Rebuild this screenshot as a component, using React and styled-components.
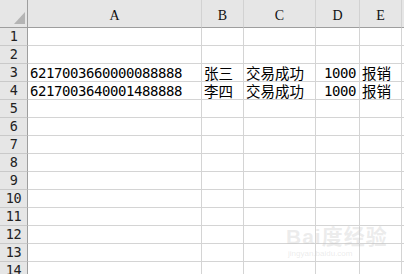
import React from 'react';
import styled, { createGlobalStyle } from 'styled-components';

const GlobalStyle = createGlobalStyle`
  html, body {
    margin: 0;
    padding: 0;
    background: #ffffff;
  }
`;

const columns = ['A', 'B', 'C', 'D', 'E'];
const rows = {
  3: ['6217003660000088888', '张三', '交易成功', '1000', '报销'],
  4: ['6217003640001488888', '李四', '交易成功', '1000', '报销'],
};

const Sheet = styled.div`
  position: relative;
  width: 404px;
  height: 274px;
  overflow: hidden;
  display: grid;
  grid-template-columns: 28px 174px 42px 72px 44px 42px 1fr;
  grid-auto-rows: 18px;
  grid-template-rows: 28px;
  background: #fff;
`;

const Corner = styled.div`
  position: relative;
  background: #e6e6e6;
  border-right: 1px solid #9e9e9e;
  border-bottom: 1px solid #9e9e9e;
  &::after {
    content: '';
    position: absolute;
    right: 2px;
    bottom: 3px;
    width: 0;
    height: 0;
    border-left: 11px solid transparent;
    border-bottom: 12px solid #b4b4b4;
  }
`;

const ColHead = styled.div`
  background: #e6e6e6;
  border-right: 1px solid #d2d2d2;
  border-bottom: 1px solid #9e9e9e;
  display: flex;
  align-items: flex-end;
  justify-content: center;
  padding-bottom: 3px;
  font-family: "Liberation Serif", serif;
  font-size: 14px;
  color: #111;
`;

const RowHead = styled.div`
  background: #e6e6e6;
  border-right: 1px solid #9e9e9e;
  border-bottom: 1px solid #c9c9c9;
  display: flex;
  align-items: center;
  justify-content: center;
  font-family: "DejaVu Sans Mono", monospace;
  font-size: 13.5px;
  letter-spacing: -0.4px;
  color: #222;
  line-height: 1;
`;

const Cell = styled.div`
  border-right: 1px solid ${p => (p.$end ? 'transparent' : '#d4d4d4')};
  border-bottom: 1px solid #d4d4d4;
  display: flex;
  align-items: center;
  justify-content: ${p => (p.$right ? 'flex-end' : 'flex-start')};
  padding: 1px 3px 0 2px;
  white-space: nowrap;
  color: #000;
  font-family: ${p => (p.$cjk ? '"Noto Sans CJK SC", sans-serif' : '"DejaVu Sans Mono", monospace')};
  font-size: ${p => (p.$cjk ? '14.5px' : '14px')};
  letter-spacing: ${p => (p.$cjk ? '0' : '-0.43px')};
  line-height: 1;
`;

const Watermark = styled.div`
  position: absolute;
  left: 286px;
  top: 226px;
  color: rgba(200, 200, 200, 0.35);
  font-family: "Liberation Sans", "Noto Sans CJK SC", sans-serif;
  pointer-events: none;
  line-height: 1;
`;

const MarkTitle = styled.div`
  font-size: 21px;
  font-weight: bold;
  letter-spacing: 1px;
`;

const MarkUrl = styled.div`
  font-size: 8px;
  margin-top: 3px;
  padding-left: 2px;
`;

const isCjk = s => /[\u4e00-\u9fff]/.test(s);

export default function App() {
  return (
    <>
      <GlobalStyle />
      <Sheet>
        <Corner />
        {columns.map(c => (
          <ColHead key={c}>{c}</ColHead>
        ))}
        <ColHead />
        {Array.from({ length: 14 }, (_, i) => i + 1).map(r => (
          <React.Fragment key={r}>
            <RowHead>{r}</RowHead>
            {columns.map((c, ci) => {
              const v = rows[r] ? rows[r][ci] : '';
              return (
                <Cell key={c} $cjk={isCjk(v)} $right={ci === 3}>
                  {v}
                </Cell>
              );
            })}
            <Cell $end />
          </React.Fragment>
        ))}
        <Watermark>
          <MarkTitle>Bai度经验</MarkTitle>
          <MarkUrl>jingyan.baidu.com</MarkUrl>
        </Watermark>
      </Sheet>
    </>
  );
}
